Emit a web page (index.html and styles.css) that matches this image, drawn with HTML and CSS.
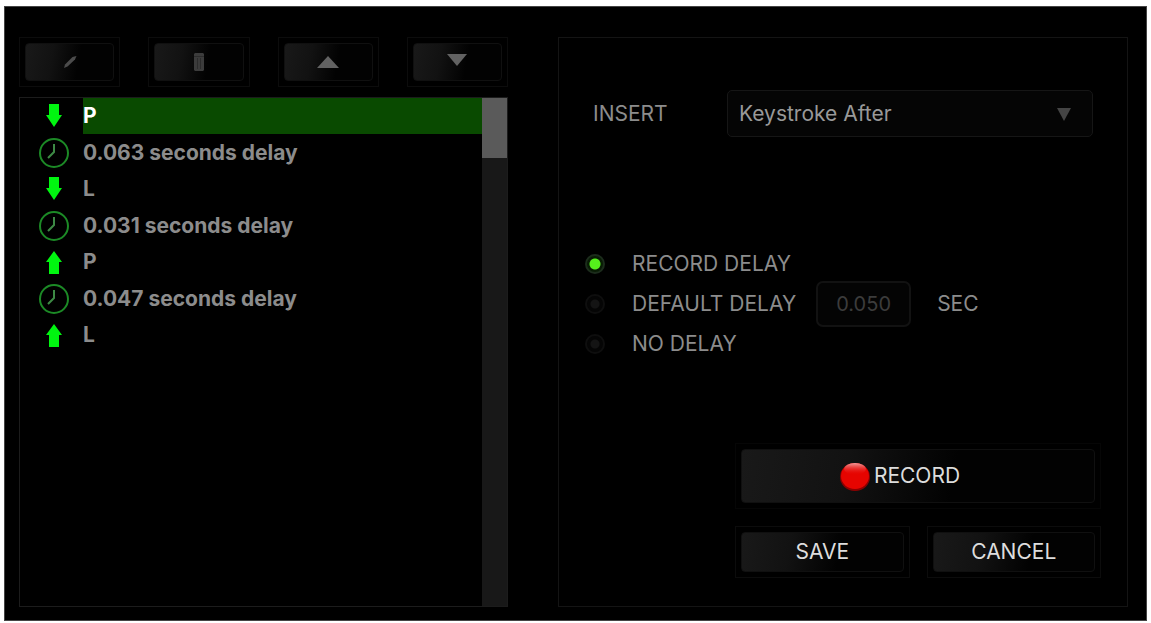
FILE: index.html
```html
<!DOCTYPE html>
<html lang="en">
<head>
  <meta charset="UTF-8">
  <title>Macro Editor</title>
  <link rel="stylesheet" href="styles.css">
</head>

<body>

  <main class="dialog">

    <!-- Recorded macro steps -->
    <section class="steps">
      <div class="toolbar">
        <div class="frame">
          <button class="btn" aria-label="Edit">
            <svg width="16" height="16" viewBox="0 0 16 16"><path d="M2 14 L3 10.500 L10.500 3 L14.500 2 L13 5.500 L5.500 12.500 Z" fill="#4c4c4c"/></svg>
          </button>
        </div>
        <div class="frame">
          <button class="btn" aria-label="Delete">
            <svg width="14" height="18" viewBox="0 0 14 18">
              <path d="M3 0 H11 L12 1 V17 L11 18 H3 L2 17 V1 Z" fill="#3c3c3c"/>
              <path d="M5.500 5 V16 M8.500 5 V16 M2 3.500 H12" stroke="#2c2c2c"/>
            </svg>
          </button>
        </div>
        <div class="frame">
          <button class="btn" aria-label="Move up">
            <svg width="22" height="12" viewBox="0 0 22 12"><path d="M11 0 L22 12 H0 Z" fill="#626262"/></svg>
          </button>
        </div>
        <div class="frame">
          <button class="btn" aria-label="Move down">
            <svg width="20" height="16" viewBox="0 0 20 16"><path d="M0 0 H20 L10 12 Z" fill="#626262"/></svg>
          </button>
        </div>
      </div>

      <div class="list-box">
        <ul class="list">
          <li class="key selected">
            <svg class="icon" viewBox="0 0 30 30"><use href="#down"/></svg><span>P</span>
          </li>
          <li class="delay">
            <svg class="icon" viewBox="0 0 30 30"><use href="#clock"/></svg><span>0.063 seconds delay</span>
          </li>
          <li class="key">
            <svg class="icon" viewBox="0 0 30 30"><use href="#down"/></svg><span>L</span>
          </li>
          <li class="delay">
            <svg class="icon" viewBox="0 0 30 30"><use href="#clock"/></svg><span>0.031 seconds delay</span>
          </li>
          <li class="key">
            <svg class="icon" viewBox="0 0 30 30"><use href="#up"/></svg><span>P</span>
          </li>
          <li class="delay">
            <svg class="icon" viewBox="0 0 30 30"><use href="#clock"/></svg><span>0.047 seconds delay</span>
          </li>
          <li class="key">
            <svg class="icon" viewBox="0 0 30 30"><use href="#up"/></svg><span>L</span>
          </li>
        </ul>
        <div class="scrollbar"><div class="thumb"></div></div>
      </div>
    </section>

    <!-- Recording options -->
    <form class="options" onsubmit="return false">
      <div class="insert-row">
        <label for="insert">INSERT</label>
        <div class="select-wrap">
          <select id="insert">
            <option>Keystroke After</option>
            <option>Keystroke Before</option>
          </select>
          <svg class="arrow" width="14" height="14" viewBox="0 0 14 14"><path d="M0 0 H14 L7 13 Z" fill="#444"/></svg>
        </div>
      </div>

      <div class="delays">
        <div class="delay-row">
          <input type="radio" name="delay" id="recordDelay" checked>
          <label for="recordDelay">RECORD DELAY</label>
        </div>
        <div class="delay-row">
          <input type="radio" name="delay" id="defaultDelay">
          <label for="defaultDelay">DEFAULT DELAY</label>
          <input type="text" id="seconds" value="0.050" disabled>
          <label for="seconds">SEC</label>
        </div>
        <div class="delay-row">
          <input type="radio" name="delay" id="noDelay">
          <label for="noDelay">NO DELAY</label>
        </div>
      </div>

      <div class="actions">
        <div class="frame record">
          <button class="btn">
            <svg width="30" height="30" viewBox="0 0 30 30">
              <defs>
                <linearGradient id="shine" x1="0" y1="0" x2="0" y2="1">
                  <stop offset="0" stop-color="#f0a0a0"/>
                  <stop offset="1" stop-color="#e60400" stop-opacity="0"/>
                </linearGradient>
              </defs>
              <ellipse cx="15" cy="16" rx="15" ry="14" fill="#8c0000"/>
              <ellipse cx="15" cy="15" rx="14" ry="13" fill="#e60400"/>
              <ellipse cx="15" cy="8" rx="11" ry="6" fill="url(#shine)"/>
            </svg>
            RECORD
          </button>
        </div>
        <div class="frame"><button class="btn">SAVE</button></div>
        <div class="frame"><button class="btn">CANCEL</button></div>
      </div>
    </form>

  </main>

  <!-- Step icons -->
  <svg width="0" height="0" class="sprites">
    <symbol id="down" viewBox="0 0 30 30"><path d="M10 3 H20 V14 H23 L15 26 L7 14 H10 Z" fill="#00f510"/></symbol>
    <symbol id="up" viewBox="0 0 30 30"><path d="M15 4 L23 15 H20 V27 H10 V15 H7 Z" fill="#00f510"/></symbol>
    <symbol id="clock" viewBox="0 0 30 30">
      <circle cx="15" cy="15" r="14" fill="none" stroke="#1c8a26" stroke-width="2"/>
      <path d="M15 6 V14 L9 20" fill="none" stroke="#3d8a45" stroke-width="2"/>
    </symbol>
  </svg>

</body>
</html>
```

FILE: styles.css
```css
* {
  box-sizing: border-box;
}

body {
  margin: 0;
  padding: 6px 4px 2px;
  background: #fff;
  font-family: Inter, Roboto, sans-serif;
  font-size: 21px;
  line-height: 24px;
  color: #8c8c8c;
}

.dialog {
  display: grid;
  grid-template-columns: 489fr 570fr;
  gap: 50px;
  min-height: calc(100vh - 8px);
  padding: 30px 18px 13px 14px;
  background: #000;
  border: 1px solid #444;
}

.steps {
  display: flex;
  flex-direction: column;
  gap: 10px;
}

.toolbar {
  display: grid;
  grid-template-columns: repeat(4, 1fr);
  gap: 28px;
}

.frame {
  display: flex;
  padding: 5px;
  border: 1px solid #0c0c0c;
}

.btn {
  flex: 1;
  display: flex;
  align-items: center;
  justify-content: center;
  gap: 4px;
  height: 38px;
  padding: 0;
  border: 1px solid #101010;
  border-radius: 4px;
  background: linear-gradient(100deg, #191919, #121212 30%, #020202 60%);
  font: inherit;
  color: #ddd;
  cursor: pointer;
}

.list-box {
  flex: 1;
  display: flex;
  border: 1px solid #1c1c1c;
}

.list {
  flex: 1;
  margin: 0;
  padding: 0;
  list-style: none;
  font-weight: bold;
}

.list li {
  display: flex;
  align-items: center;
  height: 36px;
}

.list .delay {
  height: 37px;
}

.list span {
  flex: 1;
  line-height: 36px;
}

.icon {
  width: 30px;
  height: 30px;
  margin: 0 14px 0 19px;
}

.selected span {
  background: #094a00;
  color: #fff;
}

.scrollbar {
  width: 25px;
  background: #181818;
}

.thumb {
  height: 60px;
  background: #5a5a5a;
}

.options {
  display: flex;
  flex-direction: column;
  padding: 52px 26px 28px 34px;
  border: 1px solid #141414;
}

.insert-row {
  display: flex;
  align-items: center;
}

.insert-row label {
  width: 134px;
}

.select-wrap {
  flex: 1;
  margin-right: 8px;
  position: relative;
}

select {
  width: 100%;
  height: 47px;
  padding: 0 11px;
  appearance: none;
  border: 1px solid #161616;
  border-radius: 5px;
  background: #050505;
  font: inherit;
  color: #999;
}

.arrow {
  position: absolute;
  right: 22px;
  top: 18px;
  pointer-events: none;
}

.delays {
  margin-top: 107px;
}

.delay-row {
  display: flex;
  align-items: center;
  height: 40px;
}

input[type="radio"] {
  appearance: none;
  width: 20px;
  height: 20px;
  margin: 0 27px 0 -8px;
  border: 2px solid #0e0e0e;
  border-radius: 50%;
  background: radial-gradient(circle, #141414 4px, #050505 5px);
}

input[type="radio"]:checked {
  border-color: #1c2c1c;
  background: radial-gradient(circle, #55f01c 5px, #081c04 6px);
}

input[type="text"] {
  width: 95px;
  height: 46px;
  margin: 0 26px 0 20px;
  border: 2px solid #121212;
  border-radius: 7px;
  background: #040404;
  font: inherit;
  font-size: 20px;
  text-align: center;
  color: #3c3c3c;
}

.actions {
  display: grid;
  grid-template-columns: 1fr 1fr;
  gap: 17px;
  width: 366px;
  margin: auto 0 0 auto;
}

.record {
  grid-column: 1 / 3;
  border-color: #060606;
}

.record .btn {
  height: 54px;
  padding-right: 36px;
}

.actions .btn {
  min-height: 40px;
}

.sprites {
  position: absolute;
}
```
